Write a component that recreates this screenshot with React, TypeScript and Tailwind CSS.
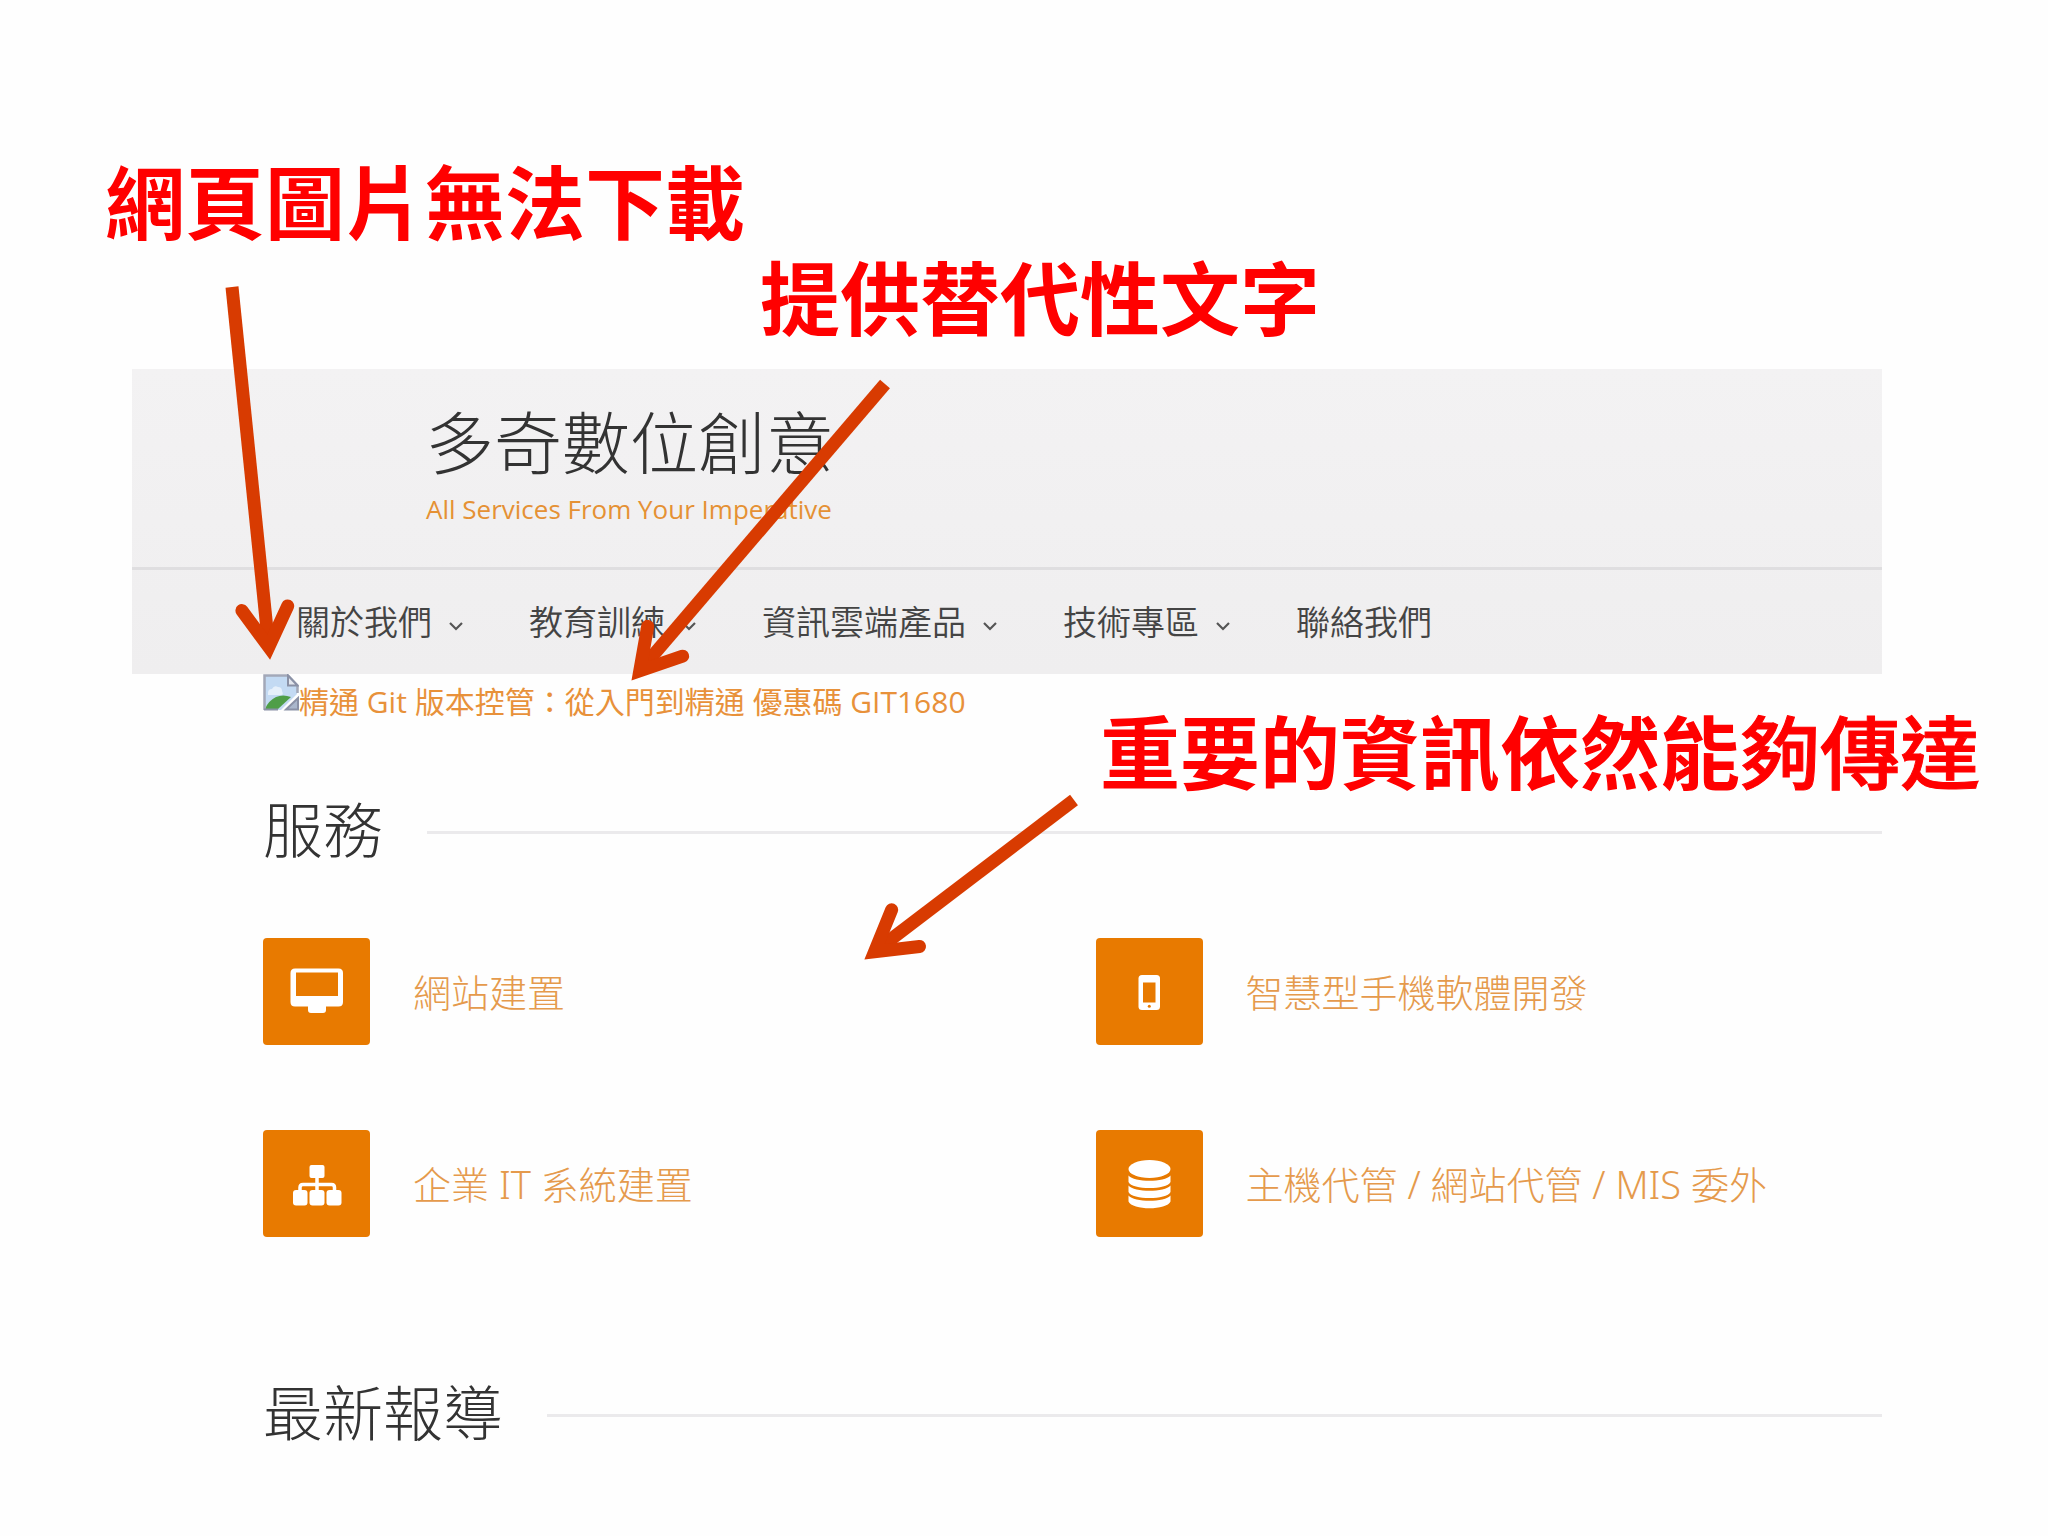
import React from 'react';

interface NavItem {
  label: string;
  hasMenu: boolean;
}

interface Service {
  label: string;
  icon: React.ReactNode;
}

interface ArrowProps {
  from: [number, number];
  to: [number, number];
}

const navItems: NavItem[] = [
  { label: '關於我們', hasMenu: true },
  { label: '教育訓練', hasMenu: true },
  { label: '資訊雲端產品', hasMenu: true },
  { label: '技術專區', hasMenu: true },
  { label: '聯絡我們', hasMenu: false },
];

/* Service icons, all on the same 107 unit tile */

function MonitorIcon() {
  return (
    <svg viewBox="0 0 107 107" className="size-full" aria-hidden="true">
      <path
        fill="#fff"
        fillRule="evenodd"
        d="M32 30.5H75.500Q80 30.500 80 35V64Q80 68.500 75.500 68.500H63V72Q63 75 60 75H48Q45 75 45 72V68.500H32Q27.500 68.500 27.500 64V35Q27.500 30.500 32 30.500ZM33 34.500V58H75V34.500Z"
      />
    </svg>
  );
}

function SitemapIcon() {
  return (
    <svg viewBox="0 0 107 107" className="size-full" aria-hidden="true">
      <g fill="#fff">
        <rect x="46.500" y="35" width="15" height="13" rx="2" />
        <rect x="30" y="60" width="14.500" height="15.500" rx="3" />
        <rect x="46.500" y="60" width="15" height="15.500" rx="3" />
        <rect x="63.500" y="60" width="15" height="15.500" rx="3" />
      </g>
      <path
        d="M54 47V61M37 61V57.500Q37 54.500 40 54.500H68.500Q71.500 54.500 71.500 57.500V61"
        fill="none"
        stroke="#fff"
        strokeWidth="3.500"
      />
    </svg>
  );
}

function PhoneIcon() {
  return (
    <svg viewBox="0 0 107 107" className="size-full" aria-hidden="true">
      <rect x="42.500" y="37" width="21.500" height="35" rx="3.500" fill="#fff" />
      <rect x="47" y="44.500" width="12.500" height="20" fill="#e87a00" />
      <circle cx="53.300" cy="68.300" r="1.500" fill="#e87a00" />
    </svg>
  );
}

function DatabaseIcon() {
  return (
    <svg viewBox="0 0 107 107" className="size-full" aria-hidden="true">
      <g fill="#fff">
        <ellipse cx="53.500" cy="39" rx="21" ry="9" />
        <path d="M32.500 45.500C38 52.500 69 52.500 74.500 45.500V52C71 60 36 60 32.500 52Z" />
        <path d="M32.500 55.500C38 62.500 69 62.500 74.500 55.500V62C71 70 36 70 32.500 62Z" />
        <path d="M32.500 65.500C38 72.500 69 72.500 74.500 65.500V71.500C71 80.500 36 80.500 32.500 71.500Z" />
      </g>
    </svg>
  );
}

const services: Service[] = [
  { label: '網站建置', icon: <MonitorIcon /> },
  { label: '智慧型手機軟體開發', icon: <PhoneIcon /> },
  { label: '企業 IT 系統建置', icon: <SitemapIcon /> },
  { label: '主機代管 / 網站代管 / MIS 委外', icon: <DatabaseIcon /> },
];

/**
 * Torn page icon shown where an image failed to load
 */
function BrokenImageIcon() {
  return (
    <svg viewBox="0 0 36 37" className="h-[37px] w-9 shrink-0" aria-hidden="true">
      <path d="M1 1H25L34 11V20L18 36H1Z" fill="#c3daf3" />
      <path d="M5 19Q5 15 9 15Q11 11 15 13Q19 13 19 17Q21 21 18 21H5Z" fill="#e6f0fb" />
      <path d="M2 35Q5 27 13 23Q20 20 28 23L15 35Z" fill="#4f9e48" />
      <path d="M1.500 36V1.500H25L34.500 11.500V19" fill="none" stroke="#a3a8b8" strokeWidth="2.500" />
      <path d="M1 35.500H15" stroke="#8a91a6" strokeWidth="2" />
      <path d="M23 35.500L35 24V35.500Z" fill="#aab7cc" stroke="#8a91a6" strokeWidth="2" />
      <path d="M25 1.500V11.500H34.500Z" fill="#e4e7ee" stroke="#8a91a6" strokeWidth="2" />
    </svg>
  );
}

/**
 * Callout arrow: square tail, pointed tip and round barbs
 */
function Arrow({ from, to }: ArrowProps) {
  const dx = to[0] - from[0];
  const dy = to[1] - from[1];
  const length = Math.hypot(dx, dy);
  const angle = (Math.atan2(dy, dx) * 180) / Math.PI;

  return (
    <g transform={`translate(${to[0]} ${to[1]}) rotate(${angle})`}>
      <path d={`M${-length} 0H-12`} />
      <path d="M-51 -23L-12 0L-51 23" strokeLinecap="round" strokeLinejoin="miter" />
    </g>
  );
}

function SectionTitle({ children }: { children: React.ReactNode }) {
  return (
    <div className="flex items-center gap-11">
      <h2 className="text-[60px] leading-[80px] font-light text-[#333]">{children}</h2>
      <div className="mt-1 h-[3px] flex-1 bg-[#ebeaec]" />
    </div>
  );
}

export default function App() {
  return (
    <div className="relative min-h-screen overflow-hidden bg-[#fefefe] pt-[369px] pr-[166px] pl-[132px] font-['Noto_Sans','Noto_Sans_CJK_TC',sans-serif]">
      <header className="bg-linear-to-b from-[#f3f2f3] to-[#efeeef]">
        <div className="border-b-3 border-[#dfdee0] pt-9 pb-10 pl-[294px]">
          <h1 className="text-[68px] leading-[76px] font-light text-[#333]">多奇數位創意</h1>
          <p className="mt-[10px] font-['Open_Sans',sans-serif] text-[26px] leading-9 text-[#e59134]">
            All Services From Your Imperative
          </p>
        </div>
        <nav className="flex h-[104px] items-center gap-[66px] pl-[164px]">
          {navItems.map((item) => (
            <a key={item.label} href="#" className="flex items-center gap-[17px] text-[34px] leading-10 font-[350] text-[#444]">
              {item.label}
              {item.hasMenu && (
                <svg viewBox="0 0 14 9" className="mt-2 h-[9px] w-3.5" aria-hidden="true">
                  <path d="M1 1L7 7L13 1" fill="none" stroke="#555" strokeWidth="2.200" />
                </svg>
              )}
            </a>
          ))}
        </nav>
      </header>

      <main className="pl-[131px]">
        <a href="#" className="flex items-start text-[#e8913a]">
          <BrokenImageIcon />
          <span className="mt-2 font-['Open_Sans','Noto_Sans_CJK_TC',sans-serif] text-[30px] leading-10 font-normal">
            精通 Git 版本控管：從入門到精通 優惠碼 GIT1680
          </span>
        </a>

        <section className="mt-[68px]">
          <SectionTitle>服務</SectionTitle>
          <div className="mt-[68px] grid grid-cols-2 gap-x-[46px] gap-y-[85px]">
            {services.map((service) => (
              <a key={service.label} href="#" className="flex items-center gap-[43px] text-[38px] leading-[48px] font-light text-[#e59a4c]">
                <span className="size-[107px] shrink-0 rounded bg-[#e87a00]">{service.icon}</span>
                <span className="whitespace-nowrap">{service.label}</span>
              </a>
            ))}
          </div>
        </section>

        <section className="mt-[136px]">
          <SectionTitle>最新報導</SectionTitle>
        </section>
      </main>

      {/* Callouts over the page */}
      <div className="pointer-events-none absolute inset-0 text-[80px] leading-[96px] font-bold whitespace-nowrap text-[#f00]">
        <p className="absolute top-[154px] left-[105px]">網頁圖片無法下載</p>
        <p className="absolute top-[250px] left-[760px]">提供替代性文字</p>
        <p className="absolute top-[704px] left-[1100px]">
          重要的資訊依然能<span className="font-medium [-webkit-text-stroke:1px_#f00]">夠傳達</span>
        </p>
        <svg viewBox="0 0 2048 1536" preserveAspectRatio="xMinYMin" className="absolute inset-0 size-full" fill="none" stroke="#d83b01" strokeWidth="13" strokeMiterlimit="10" aria-hidden="true">
          <Arrow from={[232, 287]} to={[270, 659]} />
          <Arrow from={[885, 384]} to={[632, 680]} />
          <Arrow from={[1074, 800]} to={[865, 959]} />
        </svg>
      </div>
    </div>
  );
}
